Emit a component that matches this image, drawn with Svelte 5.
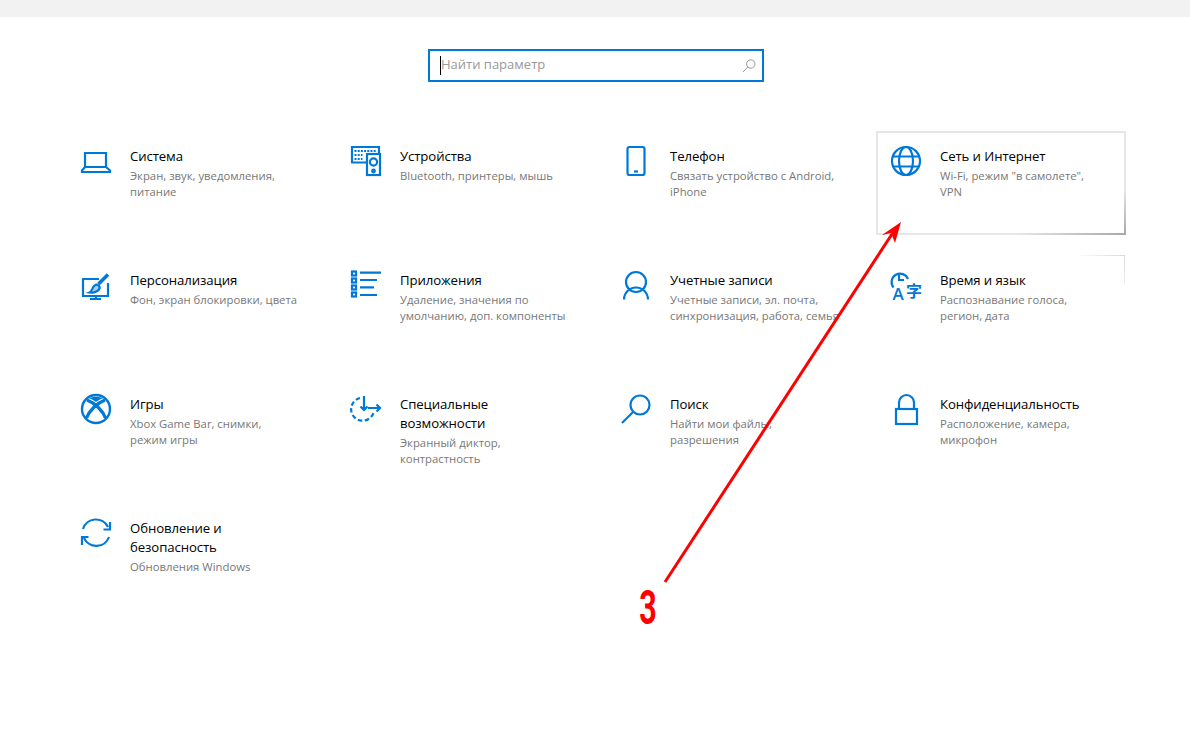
<script>
	const items = [
		{ icon: 'laptop', title: 'Система', desc: 'Экран, звук, уведомления, питание' },
		{ icon: 'devices', title: 'Устройства', desc: 'Bluetooth, принтеры, мышь' },
		{ icon: 'phone', title: 'Телефон', desc: 'Связать устройство с Android, iPhone' },
		{ icon: 'globe', title: 'Сеть и Интернет', desc: 'Wi-Fi, режим "в самолете", VPN', hover: true },
		{ icon: 'paint', title: 'Персонализация', desc: 'Фон, экран блокировки, цвета' },
		{ icon: 'apps', title: 'Приложения', desc: 'Удаление, значения по умолчанию, доп. компоненты' },
		{ icon: 'user', title: 'Учетные записи', desc: 'Учетные записи, эл. почта, синхронизация, работа, семья' },
		{ icon: 'time', title: 'Время и язык', desc: 'Распознавание голоса, регион, дата', fade: true },
		{ icon: 'xbox', title: 'Игры', desc: 'Xbox Game Bar, снимки, режим игры' },
		{ icon: 'access', title: 'Специальные возможности', desc: 'Экранный диктор, контрастность' },
		{ icon: 'search', title: 'Поиск', desc: 'Найти мои файлы, разрешения' },
		{ icon: 'lock', title: 'Конфиденциальность', desc: 'Расположение, камера, микрофон' },
		{ icon: 'update', title: 'Обновление и безопасность', desc: 'Обновления Windows' }
	];
</script>

{#snippet icon(name)}
	<svg class="icon" viewBox="0 0 32 32" fill="none" stroke="#0078d7" stroke-width="2.2">
		{#if name === 'laptop'}
			<path d="M5 23V9h21v14" />
			<path d="M5 23h21l4 3.500V28H2v-1.500z" />
		{:else if name === 'devices'}
			<path d="M16 18.500H2V3h27v6" />
			<path d="M4.500 7h22M4.500 11h8M4.500 15h8" stroke-dasharray="2 1.200" stroke-width="1.800" />
			<rect x="17" y="10" width="13" height="21" />
			<circle cx="23.500" cy="18" r="3.600" />
			<circle cx="23.500" cy="27" r="1.300" />
		{:else if name === 'phone'}
			<rect x="7.500" y="3" width="17" height="28" rx="2" />
			<path d="M14 27.500h4" />
		{:else if name === 'globe'}
			<circle cx="16" cy="17" r="14" />
			<ellipse cx="16" cy="17" rx="7" ry="14" />
			<path d="M3 12.500h26M3 22.500h26" />
		{:else if name === 'paint'}
			<path d="M19 11H3v17h25V15" />
			<path d="M16 28v3M10 31h11" />
			<path d="M28 6.500l-9.500 9.500" stroke-width="3.600" />
			<path d="M14.500 17.500c3-2.500 6.500 1 4.500 4-1.700 2.400-6.500 3.500-9.500 3 2.500-1 2.500-4.500 5-7z" fill="#0078d7" fill-opacity="0.35" />
		{:else if name === 'apps'}
			<rect x="2" y="3.500" width="4" height="4" />
			<rect x="2" y="10.500" width="4" height="4" />
			<rect x="2" y="17.500" width="4" height="4" />
			<rect x="2" y="24.500" width="4" height="4" />
			<path d="M10 4.600h21M10 12h17M10 19.300h14M10 27h17" />
		{:else if name === 'user'}
			<circle cx="16" cy="14" r="10" />
			<path d="M4 31.500a12 12 0 0 1 24 0" />
		{:else if name === 'time'}
			<path d="M3.500 19.500A8.500 8.500 0 1 1 18 11" />
			<path d="M9 6.500V12h5" />
			<text class="glyph latin" x="2.500" y="31.500">A</text>
			<text class="glyph cjk" x="16" y="28.500">字</text>
		{:else if name === 'xbox'}
			<circle cx="16" cy="17" r="14" stroke-width="2.400" />
			<path d="M6.500 26C9 19 17 11 25 8" stroke-width="3.200" />
			<path d="M25.500 26C23 19 15 11 7 8" stroke-width="3.200" />
			<path d="M9 6.500C13 4 19 4 23 6.500 20 7 18 8.500 16 10 14 8.500 12 7 9 6.500z" fill="#0078d7" stroke="none" />
		{:else if name === 'access'}
			<path d="M10 6a11.500 11.500 0 1 0 14 13" stroke-dasharray="4.500 2.600" />
			<path d="M14 4v14M10.500 14.500l3.500 3.500 3.500-3.500" />
			<path d="M18 16h12M26.500 12.500l3.500 3.500-3.500 3.500" />
		{:else if name === 'search'}
			<circle cx="20" cy="13" r="9.500" />
			<path d="M13 20L2 31" />
		{:else if name === 'lock'}
			<rect x="6" y="17" width="21" height="15" />
			<path d="M9 17v-6.500a7.500 7.500 0 0 1 15 0V17" />
		{:else if name === 'update'}
			<path d="M3 13A13.500 13.500 0 0 1 28 11" />
			<path d="M30 6v7.500h-6.500" />
			<path d="M4 22a13.500 13.500 0 0 0 25-1" />
			<path d="M2 29v-8h6.500" />
		{/if}
	</svg>
{/snippet}

<div class="page">
	<div class="topbar"></div>

	<div class="search">
		<span class="caret"></span>
		<span class="placeholder">Найти параметр</span>
		<svg class="search-icon" viewBox="0 0 14 14" fill="none" stroke="#999" stroke-width="1">
			<circle cx="8.800" cy="5" r="4.200" />
			<path d="M5.800 8L1 13" />
		</svg>
	</div>

	<div class="grid">
		{#each items as item}
			<div class="card" class:hover={item.hover} class:fade={item.fade}>
				{@render icon(item.icon)}
				<div class="text">
					<div class="title">{item.title}</div>
					<div class="desc">{item.desc}</div>
				</div>
			</div>
		{/each}
	</div>

	<!-- annotation drawn over the screenshot -->
	<svg class="arrow" viewBox="0 0 1190 742">
		<path d="M665 582L892 234" stroke="#f00" stroke-width="3" fill="none" />
		<path d="M901 222L882 235 891 233 895 243z" fill="#f00" />
	</svg>
	<span class="number">3</span>
</div>

<style>
	:global(body) {
		background: #fff;
	}

	.page {
		position: relative;
		height: 742px;
		overflow: hidden;
		font-family: 'Open Sans', 'Liberation Sans', sans-serif;
	}

	.topbar {
		height: 17px;
		background: #f2f2f2;
	}

	.search {
		box-sizing: border-box;
		display: flex;
		align-items: center;
		width: 336px;
		height: 33px;
		margin: 32px 0 0 428px;
		padding: 0 6px 0 10px;
		border: 2px solid #0078d7;
	}

	.caret {
		width: 1px;
		height: 19px;
		background: #000;
	}

	.placeholder {
		flex: 1;
		padding-bottom: 3px;
		font-size: 13px;
		color: #999;
	}

	.search-icon {
		width: 14px;
		height: 14px;
	}

	.grid {
		display: grid;
		grid-template-columns: repeat(4, 248px);
		grid-auto-rows: 102px;
		gap: 22px;
		margin: 50px 0 0 67px;
	}

	.card {
		position: relative;
		box-sizing: border-box;
		display: flex;
		gap: 18px;
		padding: 12px 0 0 13px;
	}

	.card.hover {
		margin: -1px;
		padding: 11px 0 0 12px;
		border: 2px solid;
		border-image: linear-gradient(to bottom right, #e6e6e6 78%, #a8a8a8) 1;
	}

	.card.hover .text {
		width: 160px;
	}

	.card.fade::after {
		content: '';
		position: absolute;
		top: -1px;
		right: 0;
		width: 70px;
		height: 28px;
		border-top: 1px solid;
		border-right: 1px solid;
		border-image: linear-gradient(45deg, #fff 50%, #d8d8d8) 1;
	}

	.icon {
		flex: none;
		width: 32px;
		height: 32px;
		overflow: visible;
	}

	.glyph {
		fill: #0078d7;
		stroke: none;
	}

	.latin {
		font-family: 'Open Sans', sans-serif;
		font-size: 17px;
		font-weight: 600;
	}

	.cjk {
		font-family: 'Noto Sans CJK SC', sans-serif;
		font-size: 16px;
		font-weight: 700;
	}

	.text {
		padding-top: 3px;
		width: 171px;
	}

	.title {
		font-size: 13.2px;
		letter-spacing: -0.1px;
		line-height: 19px;
		color: #000;
	}

	.desc {
		margin-top: 2px;
		font-size: 11.3px;
		line-height: 16px;
		color: #777;
	}

	.arrow {
		position: absolute;
		inset: 0;
		width: 1190px;
		height: 742px;
		pointer-events: none;
	}

	.number {
		position: absolute;
		left: 634px;
		top: 579px;
		font-family: 'Roboto', sans-serif;
		font-size: 49px;
		line-height: 58px;
		font-weight: 700;
		color: #f00;
		transform: scaleX(0.62);
	}
</style>
